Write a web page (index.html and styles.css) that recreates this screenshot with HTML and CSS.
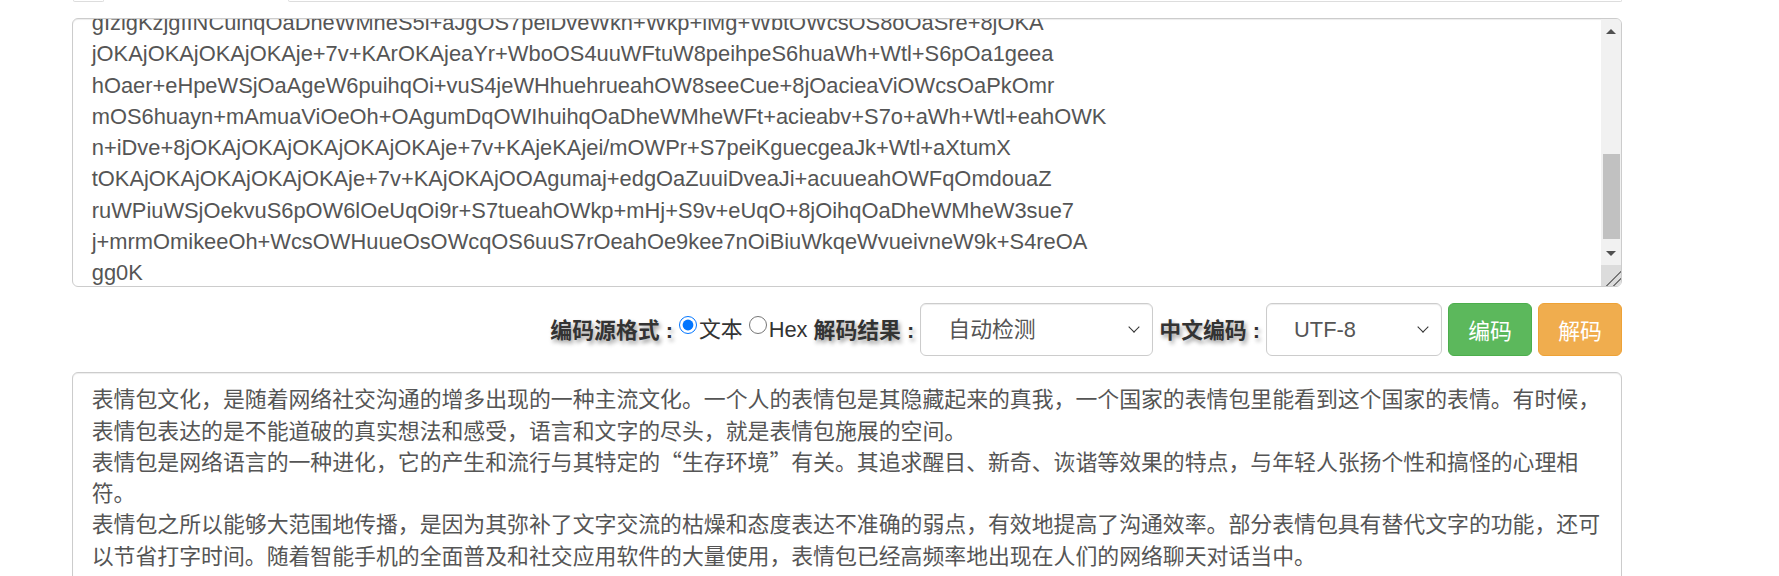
FILE: index.html
```html
<!DOCTYPE html>
<html lang="zh-CN">
<head>
<meta charset="utf-8">
<title>编码解码</title>
<link rel="stylesheet" href="styles.css">
</head>
<body>
<div class="page">
  <div class="strip"><div class="strip-a"></div><div class="strip-b"></div></div>
  <div class="src-wrap">
    <textarea id="src" class="field src" spellcheck="false">gIzigKzjgIINCuihqOaDheWMheS5i+aJgOS7peiDveWkn+Wkp+iMg+WbtOWcsOS8oOaSre+8jOKA
jOKAjOKAjOKAjOKAje+7v+KArOKAjeaYr+WboOS4uuWFtuW8peihpeS6huaWh+Wtl+S6pOa1geea
hOaer+eHpeWSjOaAgeW6puihqOi+vuS4jeWHhuehrueahOW8seeCue+8jOacieaViOWcsOaPkOmr
mOS6huayn+mAmuaViOeOh+OAgumDqOWIhuihqOaDheWMheWFt+acieabv+S7o+aWh+Wtl+eahOWK
n+iDve+8jOKAjOKAjOKAjOKAjOKAje+7v+KAjeKAjei/mOWPr+S7peiKguecgeaJk+Wtl+aXtumX
tOKAjOKAjOKAjOKAjOKAje+7v+KAjOKAjOOAgumaj+edgOaZuuiDveaJi+acuueahOWFqOmdouaZ
ruWPiuWSjOekvuS6pOW6lOeUqOi9r+S7tueahOWkp+mHj+S9v+eUqO+8jOihqOaDheWMheW3sue7
j+mrmOmikeeOh+WcsOWHuueOsOWcqOS6uuS7rOeahOe9kee7nOiBiuWkqeWvueivneW9k+S4reOA
gg0K</textarea>
    <div class="vscroll" aria-hidden="true">
      <div class="sb-btn sb-up"></div>
      <div class="sb-track"><div class="sb-thumb"></div></div>
      <div class="sb-btn sb-down"></div>
      <div class="sb-corner"></div>
    </div>
  </div>
  <div class="controls">
    <span class="lbl">编码源格式<span class="colon">:</span></span>
    <label class="opt"><input type="radio" name="fmt" checked>文本</label>
    <label class="opt"><input type="radio" name="fmt">Hex</label>
    <span class="lbl">解码结果<span class="colon">:</span></span>
    <span class="sel-box sel-wide"><select class="sel"><option>自动检测</option></select></span>
    <span class="lbl">中文编码<span class="colon">:</span></span>
    <span class="sel-box sel-narrow"><select class="sel"><option>UTF-8</option></select></span>
    <button class="btn btn-enc" type="button">编码</button>
    <button class="btn btn-dec" type="button">解码</button>
  </div>
  <textarea id="dst" class="field dst" spellcheck="false">表情包文化，是随着网络社交沟通的增多出现的一种主流文化。一个人的表情包是其隐藏起来的真我，一个国家的表情包里能看到这个国家的表情。有时候，表情包表达的是不能道破的真实想法和感受，语言和文字的尽头，就是表情包施展的空间。
表情包是网络语言的一种进化，它的产生和流行与其特定的“生存环境”有关。其追求醒目、新奇、诙谐等效果的特点，与年轻人张扬个性和搞怪的心理相符。
表情包之所以能够大范围地传播，是因为其弥补了文字交流的枯燥和态度表达不准确的弱点，有效地提高了沟通效率。部分表情包具有替代文字的功能，还可以节省打字时间。随着智能手机的全面普及和社交应用软件的大量使用，表情包已经高频率地出现在人们的网络聊天对话当中。</textarea>
</div>
<script src="script.js"></script>
</body>
</html>
```

FILE: styles.css
```css
* { box-sizing: border-box; }
html, body { margin: 0; height: 100%; overflow: hidden; background: #fff; }
body {
  font-family: "Liberation Sans", "Noto Sans CJK SC", sans-serif;
  font-size: 21.875px;
  line-height: 31.25px;
  color: #333;
}
.page { margin-left: 72px; width: 1550px; }

.strip { display: flex; height: 2px; }
.strip-a { margin-left: 1px; width: 31px; border: 1px solid #ddd; border-top: 0; border-radius: 0 0 3px 3px; }
.strip-b { margin-left: auto; width: 1334px; border: 1px solid #ddd; border-top: 0; border-radius: 0 0 3px 3px; }

.field {
  display: block;
  width: 100%;
  margin: 0;
  border: 1px solid #ccc;
  border-radius: 6px;
  padding: 9.375px 18.75px;
  font: inherit;
  color: #555;
  background: #fff;
  box-shadow: inset 0 1px 1px rgba(0,0,0,.075);
  outline: none;
  resize: none;
}
.src-wrap { position: relative; margin-top: 16px; }
.src {
  height: 269px;
  overflow-y: scroll;
  padding-right: 38.75px;
  font-family: "Liberation Sans", sans-serif;
  scrollbar-width: none;
}
.src::-webkit-scrollbar { display: none; }
.dst { margin-top: 16px; height: 240px; overflow: hidden; font-family: "Noto Sans CJK SC", sans-serif; }

/* drawn scrollbar over the textarea's right edge */
.vscroll {
  position: absolute;
  top: 1px;
  right: 1px;
  bottom: 1px;
  width: 20px;
  display: flex;
  flex-direction: column;
  background: #f1f1f1;
  border-radius: 0 5px 5px 0;
  overflow: hidden;
}
.sb-btn { height: 20px; flex: none; display: flex; justify-content: center; align-items: flex-start; }
.sb-up { padding-top: 10px; }
.sb-down { padding-top: 6px; }
.sb-up::before, .sb-down::before { content: ""; width: 0; height: 0; border-left: 5px solid transparent; border-right: 5px solid transparent; }
.sb-up::before { border-bottom: 5px solid #505050; }
.sb-down::before { border-top: 5px solid #505050; }
.sb-track { flex: 1; }
.sb-thumb { margin: 115px 1px 0 2px; height: 85px; background: #c1c1c1; }
.sb-corner {
  height: 21px;
  flex: none;
  background: linear-gradient(135deg, transparent 62%, #777 62%, #777 66%, transparent 66%, transparent 80%, #777 80%, #777 84%, transparent 84%), #dcdcdc;
}

.controls {
  margin-top: 16px;
  height: 53px;
  display: flex;
  justify-content: flex-end;
  align-items: center;
  gap: 6px;
}
.lbl {
  font-family: "Noto Sans CJK SC", sans-serif;
  font-weight: bold;
  color: #333;
  text-shadow: 2px 3px 4px rgba(0,0,0,.4);
}
.colon { font-family: "Liberation Sans", sans-serif; margin-left: 6px; }
.opt { display: flex; align-items: center; color: #333; }
.opt input { width: 18px; height: 18px; margin: 0 2px 10px 0; }

.sel-box { position: relative; display: block; height: 53px; }
.sel-box::after {
  content: "";
  position: absolute;
  top: 20px;
  right: 15px;
  width: 7px;
  height: 7px;
  border-right: 1.5px solid #333;
  border-bottom: 1.5px solid #333;
  transform: rotate(45deg);
  pointer-events: none;
}
.sel {
  appearance: none;
  -webkit-appearance: none;
  display: block;
  width: 100%;
  height: 53px;
  border: 1px solid #ccc;
  border-radius: 6px;
  background: #fff;
  color: #555;
  font-family: "Liberation Sans", "Noto Sans CJK SC", sans-serif;
  font-size: 21.875px;
  padding: 0 36px 0 27px;
  box-shadow: inset 0 1px 1px rgba(0,0,0,.075);
  outline: none;
}
.sel-wide { width: 233px; }
.sel-narrow { width: 176px; }
.btn {
  height: 53px;
  width: 84px;
  padding: 0;
  border: 1px solid;
  border-radius: 6px;
  color: #fff;
  font-family: "Noto Sans CJK SC", sans-serif;
  font-size: 21.875px;
}
.btn-enc { background: #5cb85c; border-color: #4cae4c; }
.btn-dec { background: #f0ad4e; border-color: #eea236; }
```

FILE: script.js
```js
(function () {
  var src = document.getElementById('src');
  var dst = document.getElementById('dst');
  var bytes = new TextEncoder().encode(dst.value.replace(/\n/g, '\r\n'));
  var bin = '';
  for (var i = 0; i < bytes.length; i++) bin += String.fromCharCode(bytes[i]);
  var head = btoa(bin).slice(0, 11 * 76).match(/.{1,76}/g).join('\n');
  src.value = head + '\n' + src.value;
  src.scrollTop = 365;
})();
```
